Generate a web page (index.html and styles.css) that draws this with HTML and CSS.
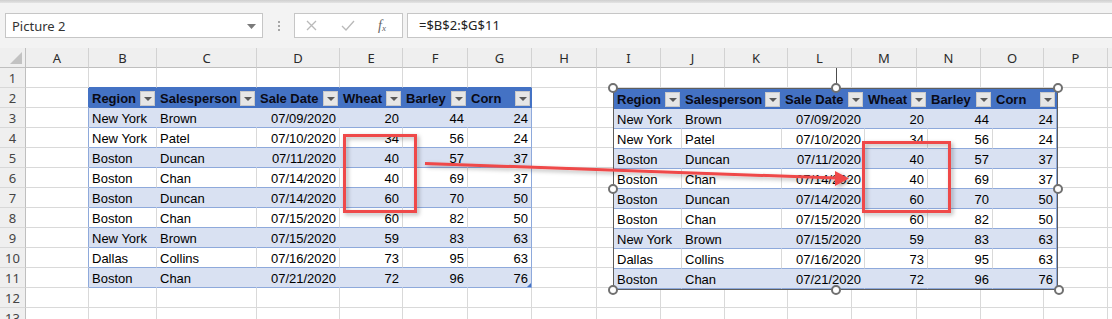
FILE: index.html
```html
<!DOCTYPE html>
<html lang="en">
<head>
    <meta charset="UTF-8">
    <meta name="viewport" content="width=device-width, initial-scale=1.0">
    <title>Picture 2 - Sales</title>
    <link rel="stylesheet" href="styles.css">
</head>
<body>

<div class="app">
    <div class="ribbon-edge"></div>

    <div class="formula-row">
        <div class="name-box">
            <span>Picture 2</span>
            <svg class="caret" width="9" height="5" viewBox="0 0 9 5"><path d="M0 0h9L4.5 5z" fill="#7a7a7a"/></svg>
        </div>
        <div class="grip"><i></i><i></i><i></i></div>
        <div class="fx-box">
            <svg width="11" height="11" viewBox="0 0 11 11"><path d="M1 1l9 9M10 1l-9 9" stroke="#b9b9b9" stroke-width="1.3"/></svg>
            <svg width="14" height="11" viewBox="0 0 14 11"><path d="M1 6l4 4 8-9" fill="none" stroke="#b9b9b9" stroke-width="1.3"/></svg>
            <span class="fx">f<sub>x</sub></span>
        </div>
        <div class="formula-input">=$B$2:$G$11</div>
    </div>

    <div class="sheet" id="sheet"></div>

    <div class="picture">
        <div class="pic-table" id="picTable"></div>
        <div class="rotate-line"></div>
        <span class="handle h-tl"></span>
        <span class="handle h-tm"></span>
        <span class="handle h-tr"></span>
        <span class="handle h-ml"></span>
        <span class="handle h-mr"></span>
        <span class="handle h-bl"></span>
        <span class="handle h-bm"></span>
        <span class="handle h-br"></span>
    </div>

    <svg class="marks" width="1112" height="319" viewBox="0 0 1112 319">
        <defs>
            <filter id="shadow" x="-20%" y="-20%" width="140%" height="140%">
                <feDropShadow dx="2" dy="2" stdDeviation="2" flood-color="#000" flood-opacity="0.3"/>
            </filter>
        </defs>
        <g filter="url(#shadow)" fill="none" stroke="#ef4848" stroke-width="3">
            <rect x="344.5" y="135.5" width="71" height="76"/>
            <rect x="863.5" y="142.5" width="86" height="69"/>
            <path d="M425 163.5L836 178"/>
            <path d="M849 178.5L835 171L835 186z" fill="#ef4848" stroke="none"/>
        </g>
    </svg>
</div>

<script>
    // the Q column is only a sliver at the window edge, so its letter is not shown
    const letters = 'ABCDEFGHIJKLMNOP'.split('').concat(['']);
    const data = [
        ['Region', 'Salesperson', 'Sale Date', 'Wheat', 'Barley', 'Corn'],
        ['New York', 'Brown', '07/09/2020', 20, 44, 24],
        ['New York', 'Patel', '07/10/2020', 34, 56, 24],
        ['Boston', 'Duncan', '07/11/2020', 40, 57, 37],
        ['Boston', 'Chan', '07/14/2020', 40, 69, 37],
        ['Boston', 'Duncan', '07/14/2020', 60, 70, 50],
        ['Boston', 'Chan', '07/15/2020', 60, 82, 50],
        ['New York', 'Brown', '07/15/2020', 59, 83, 63],
        ['Dallas', 'Collins', '07/16/2020', 73, 95, 63],
        ['Boston', 'Chan', '07/21/2020', 72, 96, 76]
    ];

    function add(parent, cls, text) {
        const d = document.createElement('div');
        d.className = cls;
        if (text !== undefined) d.textContent = text;
        parent.appendChild(d);
        return d;
    }

    function tableCell(t, k, withResize) {
        const el = document.createElement('div');
        const v = data[t][k];
        if (t === 0) {
            el.className = 'cell th';
            el.innerHTML = '<span>' + v + '</span><i class="filter"></i>';
        } else {
            el.className = 'cell td ' + (t % 2 ? 'band' : 'plain');
            if (k >= 2) el.classList.add('num');
            el.textContent = v;
        }
        if (k === 5) el.classList.add('last');
        if (withResize && t === data.length - 1 && k === 5) el.classList.add('resize');
        return el;
    }

    // worksheet grid
    const sheet = document.getElementById('sheet');
    add(sheet, 'corner');
    letters.forEach(l => add(sheet, 'colhead', l));
    for (let r = 1; r <= 13; r++) {
        add(sheet, 'rowhead', r);
        letters.forEach((l, c) => {
            const t = r - 2, k = c - 1;
            if (t >= 0 && t < data.length && k >= 0 && k < 6) {
                sheet.appendChild(tableCell(t, k, true));
                return;
            }
            let cls = 'cell';
            if (c === 0 && t >= 0 && t < data.length) cls += t === 0 ? ' edge-head' : ' edge';
            if (r === 1 && k >= 0 && k < 6) cls += ' above';
            add(sheet, cls);
        });
    }

    // linked picture copy
    const pic = document.getElementById('picTable');
    for (let t = 0; t < data.length; t++) {
        for (let k = 0; k < 6; k++) pic.appendChild(tableCell(t, k, false));
    }
</script>

</body>
</html>
```

FILE: styles.css
```css
body {
    margin: 0;
    width: 1112px;
    height: 319px;
    overflow: hidden;
    background-color: #ffffff;
    font-family: "Liberation Sans", Arial, sans-serif;
}

.app {
    position: relative;
    width: 1112px;
    height: 319px;
    overflow: hidden;
}

.ribbon-edge {
    height: 3px;
    background: linear-gradient(#cfcfcf, #e4e4e4);
}

/* name box + formula bar */
.formula-row {
    display: flex;
    align-items: center;
    height: 45px;
    padding-left: 5px;
    background-color: #f3f3f3;
    box-sizing: border-box;
    font-family: "Noto Sans", sans-serif;
    font-size: 13px;
    color: #333;
}

.name-box {
    width: 258px;
    height: 25px;
    box-sizing: border-box;
    border: 1px solid #c6c6c6;
    background-color: #fff;
    display: flex;
    align-items: center;
    justify-content: space-between;
    padding: 0 6px 0 6px;
}

.caret {
    margin-top: 1px;
}

.grip {
    width: 31px;
    display: flex;
    flex-direction: column;
    align-items: center;
    gap: 2px;
}

.grip i {
    width: 2px;
    height: 2px;
    background-color: #a6a6a6;
}

.fx-box {
    width: 109px;
    height: 25px;
    box-sizing: border-box;
    border: 1px solid #c6c6c6;
    background-color: #fff;
    display: flex;
    align-items: center;
    padding-left: 11px;
    gap: 24px;
    margin-right: 4px;
}

.fx {
    font-family: "Liberation Serif", serif;
    font-style: italic;
    font-size: 14px;
    color: #666;
    margin-left: -1px;
}

.fx sub {
    font-size: 9px;
    vertical-align: -1px;
}

.formula-input {
    flex: 1;
    height: 25px;
    box-sizing: border-box;
    border: 1px solid #c6c6c6;
    border-right: none;
    background-color: #fff;
    padding-left: 11px;
    line-height: 22px;
    color: #222;
}

/* worksheet grid */
.sheet {
    display: grid;
    grid-template-columns: 26px 63px 68px 100px 83px 63px 65px 64px 65px 64px 64px 63px 64px 65px 64px 63px 64px 20px;
    grid-auto-rows: 20px;
}

.corner,
.colhead,
.rowhead {
    background-color: #efefef;
    box-sizing: border-box;
    font-family: "Noto Sans", sans-serif;
    font-size: 13px;
    text-align: center;
    line-height: 21px;
    overflow: hidden;
}

.corner {
    position: relative;
    border-right: 1px solid #bfbfbf;
    border-bottom: 1px solid #bfbfbf;
}

.corner::after {
    content: "";
    position: absolute;
    right: 3px;
    bottom: 3px;
    border-left: 12px solid transparent;
    border-bottom: 12px solid #c2c2c2;
}

.colhead {
    color: #2b2b2b;
    border-right: 1px solid #d2d2d2;
    border-bottom: 1px solid #bfbfbf;
}

.rowhead {
    color: #444;
    border-right: 1px solid #bfbfbf;
    border-bottom: 1px solid #d8d8d8;
}

.cell {
    box-sizing: border-box;
    border-right: 1px solid #d9d9d9;
    border-bottom: 1px solid #d9d9d9;
    padding: 0 3px;
    font-size: 13px;
    line-height: 21px;
    color: #000;
    white-space: nowrap;
    overflow: hidden;
}

.cell.above {
    border-bottom-color: #4472c4;
}

.cell.edge {
    border-right-color: #8ea9db;
}

.cell.edge-head {
    border-right-color: #4472c4;
}

/* table styling */
.th {
    display: flex;
    align-items: center;
    justify-content: space-between;
    padding: 1px 1px 0 3px;
    background-color: #4472c4;
    border-right-color: #4472c4;
    border-bottom-color: #4472c4;
    font-weight: bold;
    color: #0a0a14;
}

.filter {
    position: relative;
    flex: none;
    width: 15px;
    height: 15px;
    box-sizing: border-box;
    background-color: #e6e6e6;
    border: 1px solid #c9c9c9;
}

.filter::after {
    content: "";
    position: absolute;
    left: 3px;
    top: 5px;
    border-left: 4px solid transparent;
    border-right: 4px solid transparent;
    border-top: 4px solid #595959;
}

.td {
    border-bottom-color: #8ea9db;
}

.td.band {
    background-color: #d9e1f2;
    border-right-color: #d9e1f2;
}

.td.plain {
    background-color: #ffffff;
}

.td.num {
    text-align: right;
}

.td.last {
    border-right-color: #8ea9db;
}

.td.resize {
    position: relative;
}

.td.resize::after {
    content: "";
    position: absolute;
    right: 0;
    bottom: 0;
    border-left: 4px solid transparent;
    border-bottom: 4px solid #4472c4;
}

/* floating picture of the table */
.picture {
    position: absolute;
    left: 613px;
    top: 88px;
    width: 445px;
    height: 202px;
    box-sizing: border-box;
    border: 1px solid #5e5e5e;
    background-color: #fff;
}

.pic-table {
    display: grid;
    grid-template-columns: 68px 100px 83px 63px 65px 64px;
    grid-auto-rows: 20px;
}

.rotate-line {
    position: absolute;
    left: 222px;
    top: -21px;
    width: 1px;
    height: 16px;
    background-color: #4d4d4d;
}

.handle {
    position: absolute;
    width: 10px;
    height: 10px;
    box-sizing: border-box;
    border: 2px solid #707070;
    border-radius: 50%;
    background-color: #fff;
    transform: translate(-50%, -50%);
}

.h-tl { left: -1px; top: -1px; }
.h-tm { left: 222px; top: -1px; }
.h-tr { left: 444px; top: -1px; }
.h-ml { left: -1px; top: 100px; }
.h-mr { left: 444px; top: 100px; }
.h-bl { left: -1px; top: 201px; }
.h-bm { left: 222px; top: 201px; }
.h-br { left: 445px; top: 201px; }

/* red annotations */
.marks {
    position: absolute;
    left: 0;
    top: 0;
    pointer-events: none;
}
```
